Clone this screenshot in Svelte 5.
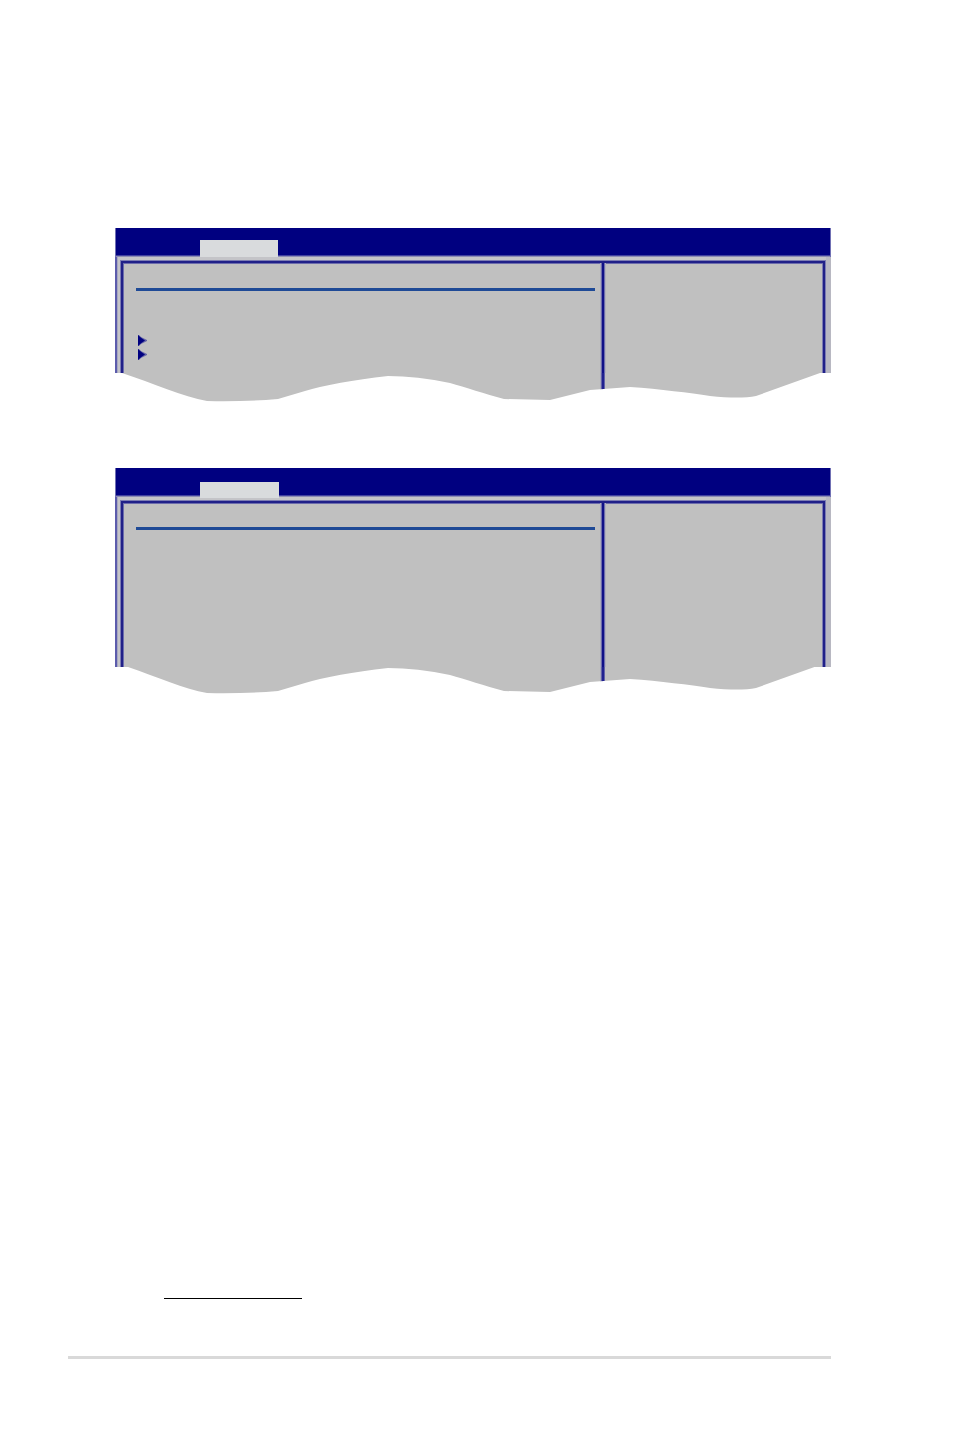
<script>
  const screens = [
    { id: 'first', arrows: 2, tearTop: 0 },
    { id: 'second', arrows: 0, tearTop: 2 },
  ];
  const tear =
    'M7 0 C38 10 68 24 92 28 Q126 29 163 26 L190 18 Q220 9 273 3 Q302 3 335 10 C350 14 370 21 389 26 L435 27 L475 17 L515 14 C545 16 575 20 595 23 Q625 26 641 23 L705 0 Z';
</script>

<main class="page">
  {#each screens as screen (screen.id)}
    <section class="screen {screen.id}">
      <div class="menu"><div class="tab"></div></div>
      <div class="body">
        <div class="frame">
          <div class="settings">
            <hr class="rule" />
            {#if screen.arrows}
              <div class="items">
                {#each Array(screen.arrows) as _, i (i)}
                  <svg class="arrow" viewBox="0 0 9 11" aria-hidden="true">
                    <path d="M0 0 H1 L3 2 L6 3.5 L9 5 V6 L6 7.5 L3 9 L1 11 H0 Z" fill="#6464a6" />
                    <path d="M0 0 L3 2.7 L7 5.5 L3 8.3 L0 11 Z" fill="#000080" />
                  </svg>
                {/each}
              </div>
            {/if}
          </div>
          <div class="help"></div>
        </div>
      </div>
      <svg class="tear" viewBox="0 {screen.tearTop} 716 {30 - screen.tearTop}" preserveAspectRatio="none" aria-hidden="true">
        <clipPath id="edge-{screen.id}"><path d={tear} /></clipPath>
        <g clip-path="url(#edge-{screen.id})">
          <rect width="716" height="30" fill="#c0c0c0" />
          <rect x="485" width="1" height="30" fill="#aaaabc" />
          <rect x="486" width="4" height="30" fill="#6262a8" />
          <rect x="487" width="2" height="30" fill="#202090" />
        </g>
      </svg>
    </section>
  {/each}
  <footer>
    <hr class="underline" />
    <hr class="baseline" />
  </footer>
</main>

<style>
  :global(body) {
    margin: 0;
    background: #fff;
  }
  hr {
    margin: 0;
    border: 0;
  }
  .page {
    box-sizing: border-box;
    min-height: 100vh;
    padding: 228px 123px 78px 68px;
    display: flex;
    flex-direction: column;
  }
  .screen {
    margin-left: 47px;
    display: flex;
    flex-direction: column;
  }
  .second {
    margin-top: 65px;
  }
  .menu {
    height: 29px;
    display: flex;
    align-items: flex-start;
    box-sizing: border-box;
    padding-left: 85px;
    background:
      linear-gradient(#7070b4, #7070b4) left / 1px 100% no-repeat,
      linear-gradient(#7070b4, #7070b4) right / 1px 100% no-repeat,
      linear-gradient(#000080 27px, #4040a0 27px 28px, #8c8cb4 28px);
  }
  .tab {
    position: relative;
    width: 78px;
    height: 17px;
    margin-top: 12px;
    background: #d9dbdd;
  }
  .second .tab {
    width: 79px;
    height: 16px;
    margin-top: 14px;
  }
  .body {
    display: flex;
    padding: 4px 6px 0;
    overflow: hidden;
    background: linear-gradient(
      to right,
      #5c5cac 2px,
      #a8a8c0 2px 3px,
      #c4c4c8 3px calc(100% - 5px),
      #b8b8c2 calc(100% - 5px)
    );
  }
  .frame {
    flex: 1;
    display: grid;
    grid-template-columns: 481fr 219fr;
    border: 2px solid #202088;
    border-bottom: 0;
    background: #c0c0c0;
    box-shadow:
      0 0 0 1px #7c7cb2,
      inset 1px 1px 0 #6c6cac,
      inset -1px 0 0 #7c7cb2;
  }
  .settings {
    height: 110px;
    box-sizing: border-box;
    padding: 25px 7px 0 13px;
    border-right: 2px solid #101088;
    box-shadow:
      inset -1px 0 0 #6c6cac,
      inset -2px 0 0 #aaaabc,
      1px 0 0 #6c6cac,
      2px 0 0 #b0b0bc;
  }
  .second .settings {
    height: 164px;
    padding-top: 24px;
  }
  .rule {
    height: 3px;
    background: #1f4a96;
  }
  .items {
    display: flex;
    flex-direction: column;
    gap: 3px;
    margin: 44px 0 0 2px;
  }
  .arrow {
    width: 9px;
    height: 11px;
    display: block;
  }
  .tear {
    width: 100%;
    height: 30px;
    display: block;
  }
  .second .tear {
    height: 28px;
  }
  footer {
    margin-top: auto;
  }
  .underline {
    width: 138px;
    height: 1px;
    margin-left: 96px;
    background: #000;
  }
  .baseline {
    height: 3px;
    margin-top: 57px;
    background: #d9d9d9;
  }
</style>
